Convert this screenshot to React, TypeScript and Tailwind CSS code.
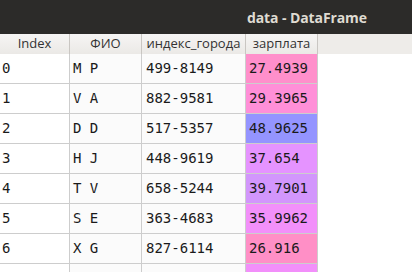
import React from "react";

type Row = {
  idx: number;
  name: string;
  code: string;
  salary: string;
  bg: string;
};

const rows: Row[] = [
  { idx: 0, name: "M P", code: "499-8149", salary: "27.4939", bg: "bg-[#ff8fcb]" },
  { idx: 1, name: "V A", code: "882-9581", salary: "29.3965", bg: "bg-[#ff8fd8]" },
  { idx: 2, name: "D D", code: "517-5357", salary: "48.9625", bg: "bg-[#9494ff]" },
  { idx: 3, name: "H J", code: "448-9619", salary: "37.654", bg: "bg-[#e593ff]" },
  { idx: 4, name: "T V", code: "658-5244", salary: "39.7901", bg: "bg-[#d296fc]" },
  { idx: 5, name: "S E", code: "363-4683", salary: "35.9962", bg: "bg-[#f290fa]" },
  { idx: 6, name: "X G", code: "827-6114", salary: "26.916", bg: "bg-[#ff8fc6]" },
  { idx: 7, name: "", code: "", salary: "", bg: "bg-[#f28ffa]" },
];

const mono = "font-['DejaVu_Sans_Mono',monospace] text-[14px] text-[#1a1a1a]";
const cell = "h-[30px] border-b border-r border-[#cdcdcd] flex items-center";
const head =
  "border-b border-r border-[#c9c6c2] bg-gradient-to-b from-[#f6f5f4] to-[#ebe9e6] flex items-center justify-center";

export default function App() {
  return (
    <div className="w-[412px] h-[272px] overflow-hidden bg-white">
      <div className="h-[34px] bg-[#2c2b29] flex items-center pl-[247px]">
        <span className="font-['Open_Sans',sans-serif] font-bold text-[14px] text-[#dfdbd2] tracking-[-0.1px]">
          data - DataFrame
        </span>
      </div>

      <div className="grid grid-cols-[70px_72px_104px_72px_1fr] h-[20px] font-['Open_Sans',sans-serif] text-[13px] text-[#333333]">
        <div className={head}>Index</div>
        <div className={head}>ФИО</div>
        <div className={head}>индекс_города</div>
        <div className={head}>зарплата</div>
        <div className="bg-[#eeece9]" />
      </div>

      <div className="grid grid-cols-[70px_72px_104px_72px_1fr]">
        {rows.map((r) => (
          <React.Fragment key={r.idx}>
            <div className={`${cell} ${mono} bg-white pl-[2px]`}>{r.name ? r.idx : ""}</div>
            <div className={`${cell} ${mono} bg-[#fbfbfb] pl-[3px]`}>{r.name}</div>
            <div className={`${cell} ${mono} bg-[#fbfbfb] pl-[4px]`}>{r.code}</div>
            <div className={`${cell} ${mono} ${r.bg} pl-[3px]`}>{r.salary}</div>
            <div className="h-[30px] bg-white" />
          </React.Fragment>
        ))}
      </div>
    </div>
  );
}
